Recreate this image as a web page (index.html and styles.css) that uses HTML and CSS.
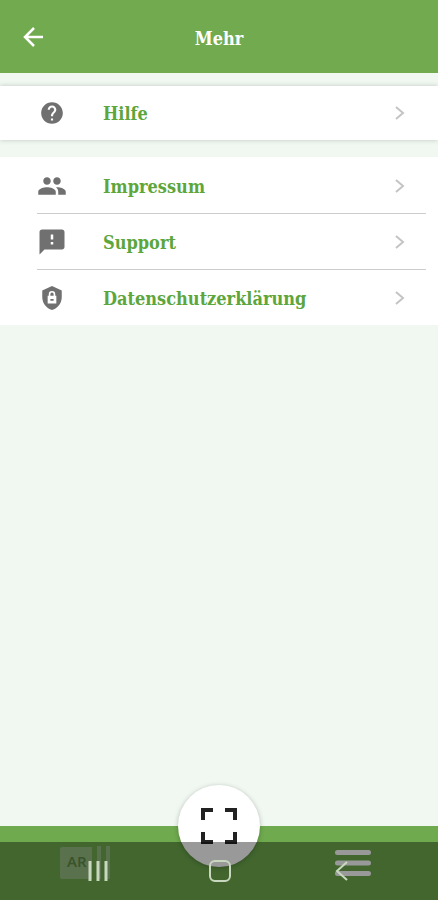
FILE: index.html
```
<!DOCTYPE html>
<html lang="de">
  <head>
    <meta charset="utf-8" />
    <title>Mehr</title>
    <meta name="viewport" content="width=device-width, initial-scale=1.0" />
    <link rel="stylesheet" href="styles.css">
  </head>
  <body>
    <header class="header">
      <button class="back-button" type="button" aria-label="Zurück">
        <svg width="20" height="20" viewBox="0 0 20 20">
          <path d="M20 10H2M11 1L2 10L11 19" />
        </svg>
      </button>
      <h1>Mehr</h1>
    </header>

    <main>
      <ul class="menu menu-card">
        <li>
          <a href="#hilfe">
            <svg class="icon" width="26" height="26" viewBox="0 0 24 24">
              <path d="M12 2C6.480 2 2 6.480 2 12s4.480 10 10 10 10-4.480 10-10S17.520 2 12 2zm1 17h-2v-2h2v2zm2.070-7.750l-.9.920C13.450 12.900 13 13.500 13 15h-2v-.5c0-1.100.450-2.100 1.170-2.830l1.240-1.260c.370-.360.590-.860.590-1.410 0-1.100-.9-2-2-2s-2 .9-2 2H8c0-2.210 1.790-4 4-4s4 1.790 4 4c0 .880-.360 1.680-.930 2.250z" />
            </svg>
            <span>Hilfe</span>
            <svg class="chevron" width="10" height="14" viewBox="0 0 10 14"><path d="M1 1l7 6l-7 6" /></svg>
          </a>
        </li>
      </ul>

      <ul class="menu menu-list">
        <li>
          <a href="#impressum">
            <svg class="icon" width="30" height="30" viewBox="0 0 24 24">
              <path d="M16 11c1.660 0 2.990-1.340 2.990-3S17.660 5 16 5s-3 1.340-3 3 1.340 3 3 3zm-8 0c1.660 0 2.990-1.340 2.990-3S9.660 5 8 5 5 6.340 5 8s1.340 3 3 3zm0 2c-2.330 0-7 1.170-7 3.500V19h14v-2.500c0-2.330-4.670-3.500-7-3.500zm8 0c-.290 0-.620.020-.970.050 1.160.840 1.970 1.970 1.970 3.450V19h6v-2.500c0-2.330-4.670-3.500-7-3.500z" />
            </svg>
            <span>Impressum</span>
            <svg class="chevron" width="10" height="14" viewBox="0 0 10 14"><path d="M1 1l7 6l-7 6" /></svg>
          </a>
        </li>
        <li>
          <a href="#support">
            <svg class="icon" width="30" height="30" viewBox="0 0 24 24">
              <path d="M20 2H4c-1.100 0-1.990.9-1.990 2L2 22l4-4h14c1.100 0 2-.9 2-2V4c0-1.100-.9-2-2-2zm-7 12h-2v-2h2v2zm0-4h-2V6h2v4z" />
            </svg>
            <span>Support</span>
            <svg class="chevron" width="10" height="14" viewBox="0 0 10 14"><path d="M1 1l7 6l-7 6" /></svg>
          </a>
        </li>
        <li>
          <a href="#datenschutz">
            <svg class="icon" width="26" height="26" viewBox="0 0 24 24">
              <path d="M12 1L3 5v6c0 5.550 3.840 10.740 9 12 5.160-1.260 9-6.450 9-12V5z" />
              <path class="lock" d="M9 10V8.500a3 3 0 0 1 6 0V10h1v7H8v-7zM10.500 10h3V8.500a1.500 1.500 0 0 0-3 0zM10.500 13v1.500h3V13z" />
            </svg>
            <span>Datenschutzerklärung</span>
            <svg class="chevron" width="10" height="14" viewBox="0 0 10 14"><path d="M1 1l7 6l-7 6" /></svg>
          </a>
        </li>
      </ul>
    </main>

    <nav class="tab-bar">
      <button type="button" aria-label="AR-Karten">
        <svg width="50" height="34" viewBox="0 0 50 34">
          <g class="cards">
            <path d="M2 1H32V33H2Q0 33 0 31V3Q0 1 2 1zM37 0H41V33H37zM46 0H50V33H46z" />
          </g>
          <text x="7" y="21">AR</text>
        </svg>
      </button>
      <button class="scan-button" type="button" aria-label="Scannen">
        <svg width="38" height="38" viewBox="0 0 38 38">
          <path d="M3 13V3H13M25 3H35V13M35 25V35H25M13 35H3V25" />
        </svg>
      </button>
      <button type="button" aria-label="Menü">
        <svg width="36" height="28" viewBox="0 0 36 28">
          <path class="lines" d="M2.500 3.500H33.500M2.500 14H33.500M2.500 24.500H33.500" />
        </svg>
      </button>
    </nav>

    <!-- system navigation lies over the tab bar -->
    <div class="system-nav">
      <button type="button" aria-label="Letzte Apps">
        <svg width="22" height="22" viewBox="0 0 22 22"><path class="thick" d="M3 1V21M11 1V21M19 1V21" /></svg>
      </button>
      <button type="button" aria-label="Startbildschirm">
        <svg width="22" height="22" viewBox="0 0 22 22"><rect x="1" y="1" width="20" height="20" rx="5" /></svg>
      </button>
      <button type="button" aria-label="Zurück">
        <svg width="22" height="22" viewBox="0 0 22 22"><path d="M16 2L6 11L16 20" /></svg>
      </button>
    </div>
  </body>
</html>
```

FILE: styles.css
```
* {
  box-sizing: border-box;
}
body {
  margin: 0;
  min-height: 100vh;
  padding-bottom: 74px;
  background: #f1f7f1;
  font-family: "DejaVu Serif Condensed", "DejaVu Serif", serif;
  font-size: 18px;
  line-height: 24px;
}
button {
  display: flex;
  align-items: center;
  justify-content: center;
  padding: 0;
  border: 0;
  background: none;
}
svg {
  display: block;
  fill: none;
}

.header {
  display: grid;
  grid-template-columns: 48px 1fr 48px;
  align-items: center;
  height: 73px;
  padding: 4px 9px 0;
  background: #71aa4f;
  color: #fff;
}
.header h1 {
  margin: 0;
  font-size: 18px;
  text-align: center;
}
.back-button {
  height: 48px;
  padding-bottom: 4px;
}
.back-button svg {
  stroke: #fff;
  stroke-width: 2.5;
}

.menu {
  margin: 0;
  padding: 0;
  background: #fff;
  list-style: none;
}
.menu-card {
  margin: 13px 0 17px;
  box-shadow: 0 0 5px rgba(0, 0, 0, 0.2);
}
.menu-list {
  padding-top: 1px;
}
.menu a {
  display: grid;
  grid-template-columns: 30px 1fr 10px;
  column-gap: 36px;
  align-items: center;
  height: 55px;
  padding: 0 33px 0 37px;
  color: #5da63c;
  font-weight: bold;
  text-decoration: none;
}
.menu-card a {
  height: 54px;
}
.menu span {
  padding-top: 2px;
}
.menu li + li::before {
  content: "";
  display: block;
  height: 1px;
  margin: 0 12px 0 37px;
  background: #ccc;
}
.icon {
  justify-self: center;
  fill: #707070;
}
.lock {
  fill: #fff;
  fill-rule: evenodd;
}
.chevron {
  stroke: #c4c4c4;
  stroke-width: 2;
}

.tab-bar {
  position: fixed;
  right: 0;
  bottom: 0;
  left: 0;
  display: grid;
  grid-template-columns: repeat(3, 1fr);
  justify-items: center;
  align-items: center;
  height: 74px;
  padding: 0 18px;
  background: #6faa4e;
}
.cards {
  fill: #97bc82;
}
.tab-bar text {
  fill: #5f8a47;
  font: 600 15px "Open Sans", sans-serif;
}
.lines {
  stroke: #fff;
  stroke-width: 5;
  stroke-linecap: round;
}
.scan-button {
  width: 82px;
  height: 82px;
  margin-top: -74px;
  border-radius: 50%;
  background: #fff;
  box-shadow: 0 1px 5px rgba(0, 0, 0, 0.25);
}
.scan-button path {
  stroke: #222;
  stroke-width: 4;
}

.system-nav {
  position: fixed;
  right: 0;
  bottom: 0;
  left: 0;
  display: grid;
  grid-template-columns: repeat(3, 1fr);
  justify-items: center;
  align-items: center;
  height: 58px;
  padding: 0 35px 0 37px;
  background: rgba(0, 0, 0, 0.4);
}
.system-nav svg {
  stroke: #c8d8bf;
  stroke-width: 2;
}
.system-nav .thick {
  stroke-width: 3;
}
```
